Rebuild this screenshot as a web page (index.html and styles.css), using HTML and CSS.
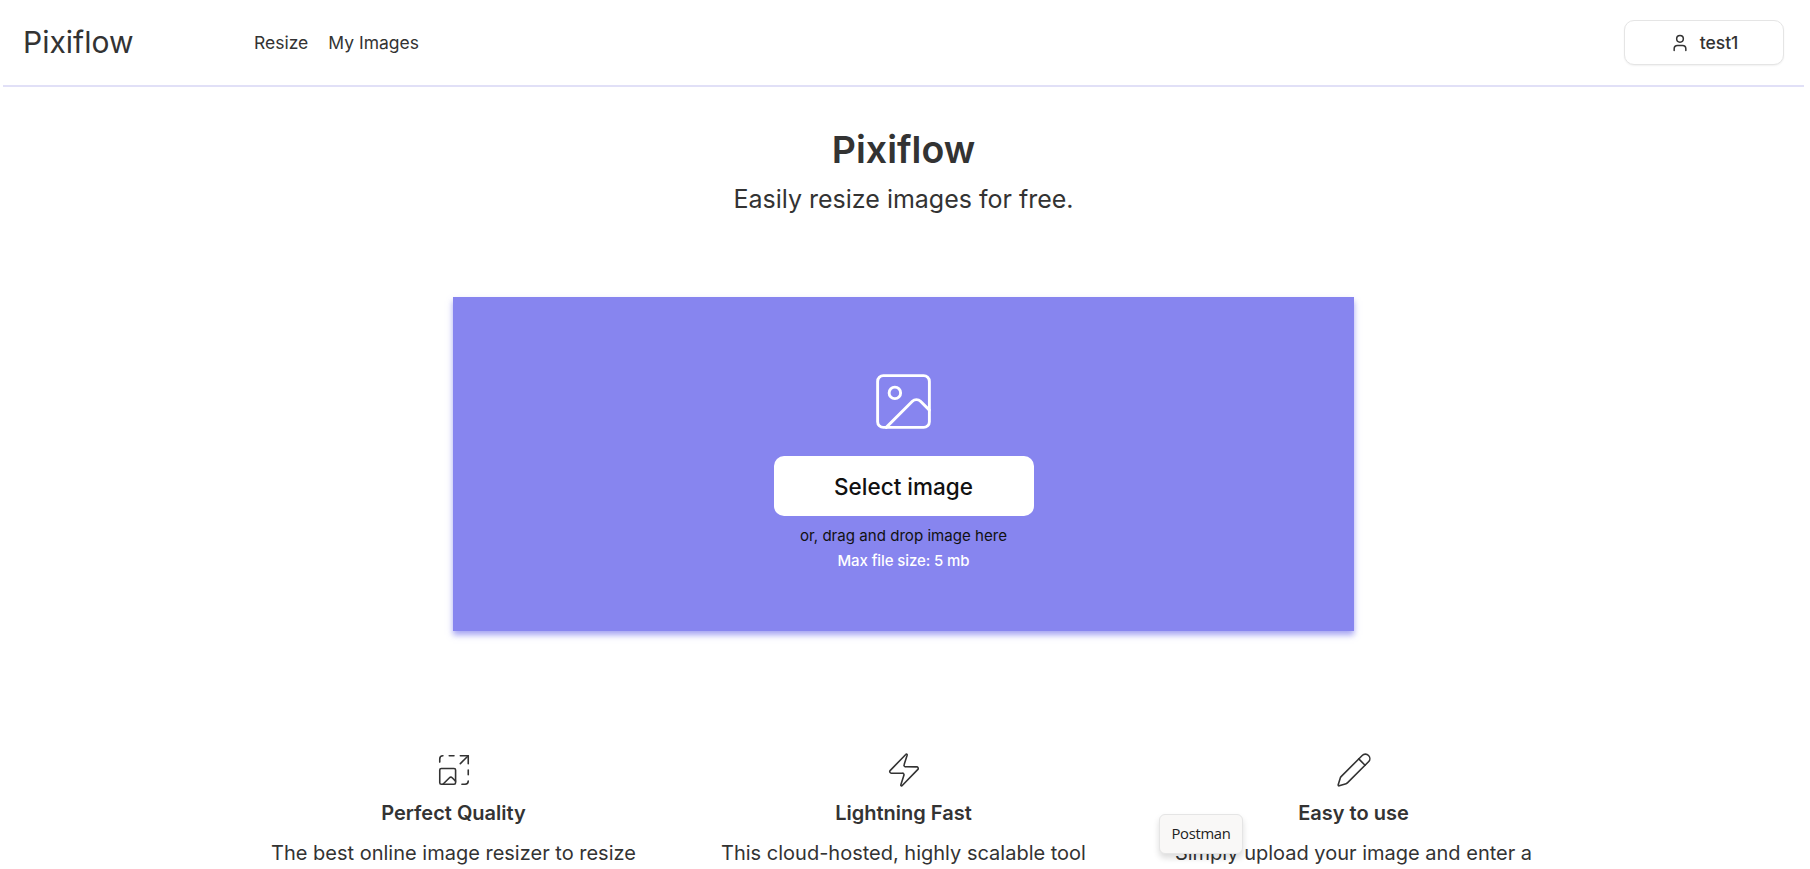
FILE: index.html
```html
<!DOCTYPE html>
<html lang="en">
<head>
<meta charset="utf-8">
<title>Pixiflow</title>
<link rel="stylesheet" href="styles.css">
</head>
<body>
<div class="page">
  <header class="navbar">
    <a class="brand">Pixiflow</a>
    <nav class="links"><a>Resize</a><a>My Images</a></nav>
    <button class="account">
      <svg class="icon user-icon" viewBox="0 0 24 24"><path d="M19 21v-2a4 4 0 0 0-4-4H9a4 4 0 0 0-4 4v2"/><circle cx="12" cy="7" r="4"/></svg>
      <span>test1</span>
    </button>
  </header>
  <main class="main">
    <h1 class="title">Pixiflow</h1>
    <p class="subtitle">Easily resize images for free.</p>
    <section class="dropzone">
      <svg class="icon image-icon" viewBox="0 0 24 24"><rect width="18" height="18" x="3" y="3" rx="2"/><circle cx="9" cy="9" r="2"/><path d="m21 15-3.086-3.086a2 2 0 0 0-2.828 0L6 21"/></svg>
      <button class="select">Select image</button>
      <p class="hint">or, drag and drop image here</p>
      <p class="limit">Max file size: 5 mb</p>
    </section>
    <section class="features">
      <article class="feature">
        <svg class="icon feature-icon" viewBox="0 0 24 24"><path d="M16 3h5v5"/><path d="M17 21h2a2 2 0 0 0 2-2"/><path d="M21 12v3"/><path d="m21 3-5 5"/><path d="M3 7V5a2 2 0 0 1 2-2"/><path d="m5 21 4.144-4.144a1.21 1.21 0 0 1 1.712 0L13 19"/><path d="M9 3h3"/><rect x="3" y="11" width="10" height="10" rx="1"/></svg>
        <h2 class="feature-title">Perfect Quality</h2>
        <p class="feature-text">The best online image resizer to resize</p>
      </article>
      <article class="feature">
        <svg class="icon feature-icon" viewBox="0 0 24 24"><path d="M4 14a1 1 0 0 1-.78-1.63l9.9-10.2a.5.5 0 0 1 .86.46l-1.92 6.02A1 1 0 0 0 13 10h7a1 1 0 0 1 .78 1.63l-9.9 10.2a.5.5 0 0 1-.86-.46l1.92-6.02A1 1 0 0 0 11 14z"/></svg>
        <h2 class="feature-title">Lightning Fast</h2>
        <p class="feature-text">This cloud-hosted, highly scalable tool</p>
      </article>
      <article class="feature">
        <svg class="icon feature-icon" viewBox="0 0 24 24"><path d="M21.174 6.812a1 1 0 0 0-3.986-3.987L3.842 16.174a2 2 0 0 0-.5.83l-1.321 4.352a.5.5 0 0 0 .623.622l4.353-1.32a2 2 0 0 0 .83-.497z"/><path d="m15 5 4 4"/></svg>
        <h2 class="feature-title">Easy to use</h2>
        <p class="feature-text">Simply upload your image and enter a</p>
      </article>
    </section>
  </main>
</div>
<div class="tooltip">Postman</div>
</body>
</html>
```
FILE: styles.css
```css
* { box-sizing: border-box; }
html, body { margin: 0; height: 100%; overflow: hidden; }
body { background: #fff; color: #333; font-family: Inter, sans-serif; }
h1, h2, p { margin: 0; }
.page { width: 1801px; margin-left: 3px; }
.icon { fill: none; stroke: currentColor; stroke-width: 1; stroke-linecap: round; stroke-linejoin: round; display: block; flex: none; }
.navbar { height: 87px; border-bottom: 2px solid #e1e0f7; display: flex; align-items: center; padding: 0 20px; }
.brand { width: 231px; font-size: 30px; line-height: 36px; padding-bottom: 2px; }
.links { display: flex; gap: 20px; font-size: 17.5px; line-height: 24px; }
.account { margin-left: auto; width: 160px; height: 45px; display: flex; align-items: center; justify-content: center; gap: 10px; background: #fff; border: 1px solid #e5e5e5; border-radius: 10px; box-shadow: 0 1px 2px rgba(0,0,0,.06); color: #333; font: 500 17.5px Inter, sans-serif; }
.user-icon { width: 20px; height: 20px; stroke-width: 1.8; }
.main { display: flex; flex-direction: column; align-items: center; padding-top: 39px; }
.title { font-size: 37.5px; font-weight: 600; line-height: 48px; }
.subtitle { margin-top: 9px; font-size: 25px; line-height: 32px; }
.dropzone { margin-top: 82px; width: 901px; height: 334px; background: #8785ef; display: flex; flex-direction: column; align-items: center; padding-top: 70px; box-shadow: 0 4px 6px rgba(135,133,239,.75); }
.image-icon { width: 69px; height: 69px; color: #fff; }
.select { margin-top: 20px; width: 260px; height: 60px; border: 0; border-radius: 10px; background: #fff; color: #111; font: 500 22.5px Inter, sans-serif; }
.hint { margin-top: 8px; font-size: 15.1px; line-height: 24px; color: #111; }
.limit { margin-top: 1px; font-size: 15px; letter-spacing: -.1px; line-height: 24px; color: #fff; font-weight: 500; }
.features { margin-top: 120px; width: 1350px; display: grid; grid-template-columns: repeat(3, 450px); }
.feature { display: flex; flex-direction: column; align-items: center; }
.feature-icon { width: 38px; height: 38px; }
.feature-title { margin-top: 12px; font-size: 20px; line-height: 24px; font-weight: 600; }
.feature-text { margin-top: 16px; font-size: 20px; line-height: 24px; white-space: nowrap; }
.tooltip { position: absolute; left: 1159px; top: 814px; width: 84px; height: 40px; border: 1px solid #e5e5e5; border-radius: 6px; background: #f9f8f7; box-shadow: 0 4px 6px rgba(0,0,0,.14); color: #222; font: 14.8px/37px "Open Sans", sans-serif; letter-spacing: -.3px; text-align: center; }
```
